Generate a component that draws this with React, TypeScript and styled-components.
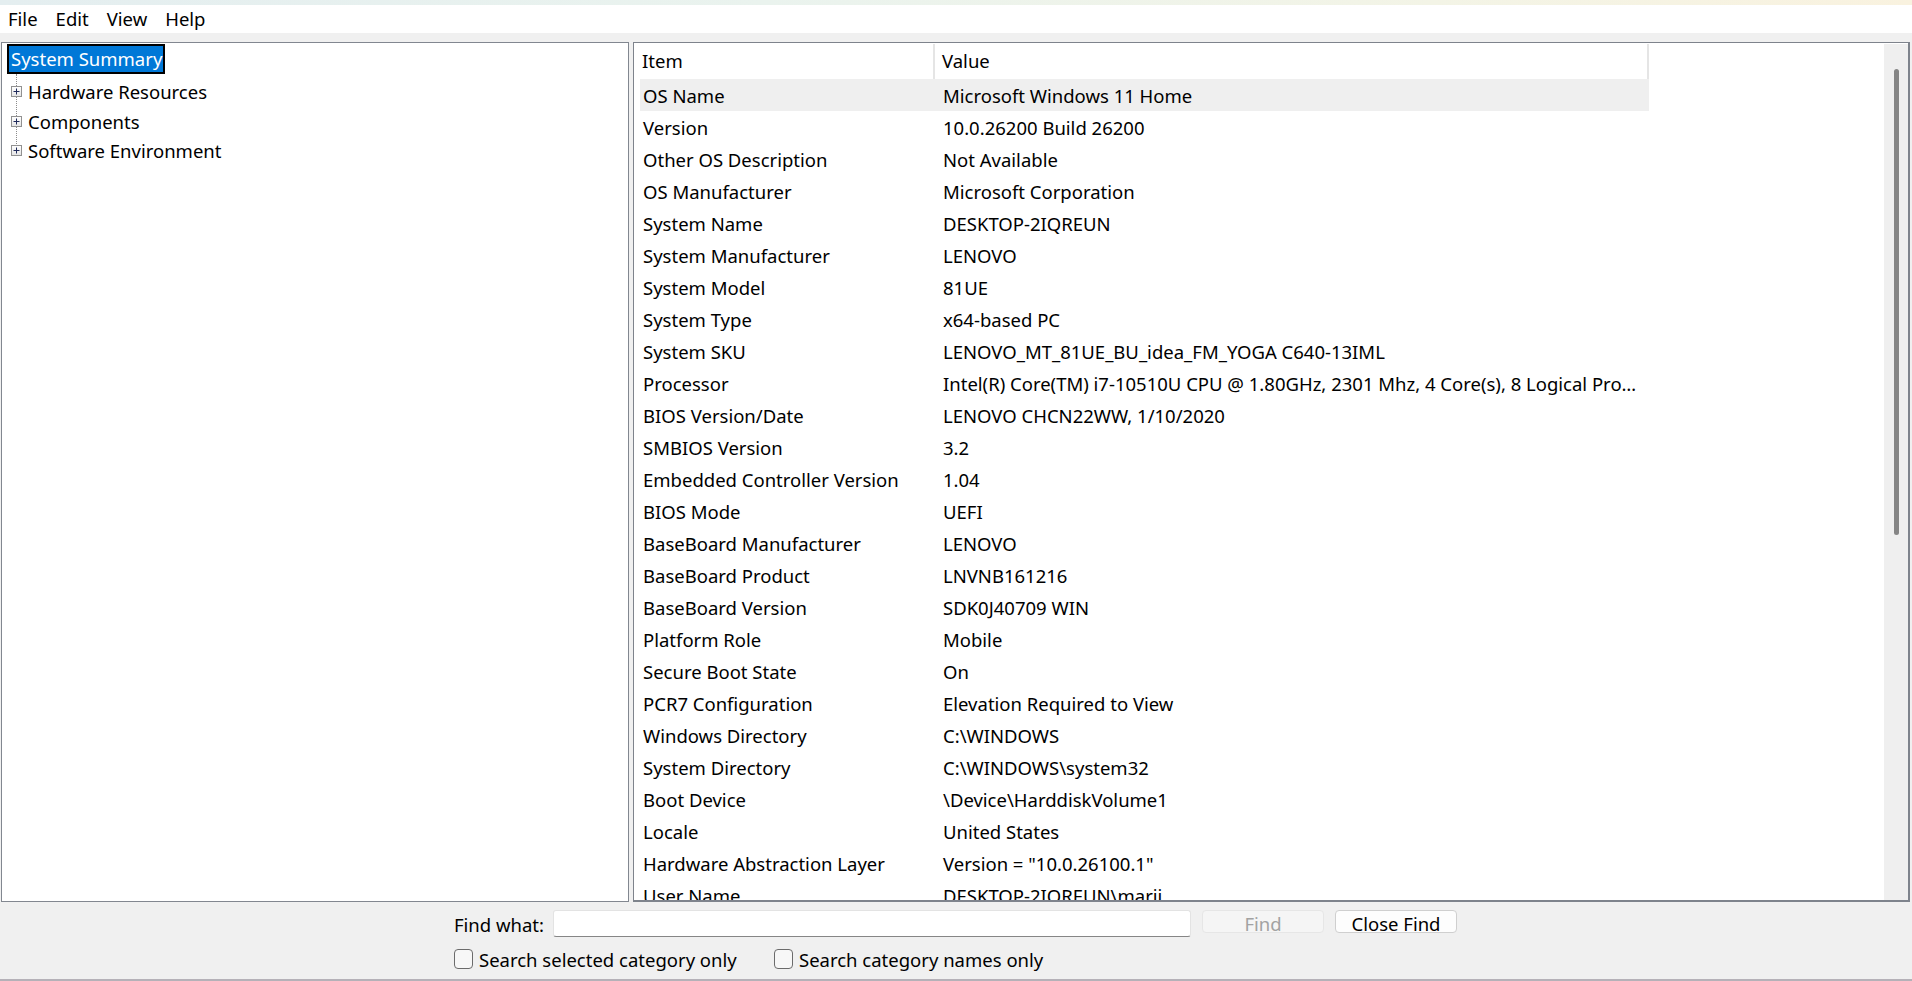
import React from 'react';
import styled, { createGlobalStyle } from 'styled-components';

const GlobalStyle = createGlobalStyle`
    html, body {
        margin: 0;
        padding: 0;
        background: #f0f0f0;
        overflow: hidden;
    }
    * {
        box-sizing: border-box;
    }
`

const rows: [string, string][] = [
    ['OS Name', 'Microsoft Windows 11 Home'],
    ['Version', '10.0.26200 Build 26200'],
    ['Other OS Description', 'Not Available'],
    ['OS Manufacturer', 'Microsoft Corporation'],
    ['System Name', 'DESKTOP-2IQREUN'],
    ['System Manufacturer', 'LENOVO'],
    ['System Model', '81UE'],
    ['System Type', 'x64-based PC'],
    ['System SKU', 'LENOVO_MT_81UE_BU_idea_FM_YOGA C640-13IML'],
    ['Processor', 'Intel(R) Core(TM) i7-10510U CPU @ 1.80GHz, 2301 Mhz, 4 Core(s), 8 Logical Processor(s)'],
    ['BIOS Version/Date', 'LENOVO CHCN22WW, 1/10/2020'],
    ['SMBIOS Version', '3.2'],
    ['Embedded Controller Version', '1.04'],
    ['BIOS Mode', 'UEFI'],
    ['BaseBoard Manufacturer', 'LENOVO'],
    ['BaseBoard Product', 'LNVNB161216'],
    ['BaseBoard Version', 'SDK0J40709 WIN'],
    ['Platform Role', 'Mobile'],
    ['Secure Boot State', 'On'],
    ['PCR7 Configuration', 'Elevation Required to View'],
    ['Windows Directory', 'C:\\WINDOWS'],
    ['System Directory', 'C:\\WINDOWS\\system32'],
    ['Boot Device', '\\Device\\HarddiskVolume1'],
    ['Locale', 'United States'],
    ['Hardware Abstraction Layer', 'Version = "10.0.26100.1"'],
    ['User Name', 'DESKTOP-2IQREUN\\marii'],
    ['Time Zone', 'Pacific Standard Time'],
]

const treeItems = ['Hardware Resources', 'Components', 'Software Environment']

const PlusBox: React.FC = () => (
    <ExpandBox>
        <svg width="9" height="9" viewBox="0 0 9 9">
            <path d="M1.5 4.5h6M4.5 1.5v6" stroke="#1f2a5a" strokeWidth="1" />
        </svg>
    </ExpandBox>
)

export default function App() {
    const [selected, setSelected] = React.useState(0)

    return (
        <Window>
            <GlobalStyle />
            <TitleStrip />
            <MenuBar>
                <MenuItem>File</MenuItem>
                <MenuItem>Edit</MenuItem>
                <MenuItem>View</MenuItem>
                <MenuItem>Help</MenuItem>
            </MenuBar>

            <Panes>
                <TreePane>
                    <SelectedNode>System Summary</SelectedNode>
                    <TreeChildren>
                        {treeItems.map(item => (
                            <TreeNode key={item}>
                                <PlusBox />
                                <span>{item}</span>
                            </TreeNode>
                        ))}
                    </TreeChildren>
                </TreePane>

                <ListPane>
                    <ListArea>
                        <HeaderRow>
                            <HeaderCell>Item</HeaderCell>
                            <HeaderCell $value>Value</HeaderCell>
                        </HeaderRow>
                        {rows.map(([item, value], i) => (
                            <DataRow key={item} $selected={i === selected} onClick={() => setSelected(i)}>
                                <ItemCell>{item}</ItemCell>
                                <ValueCell>{value}</ValueCell>
                            </DataRow>
                        ))}
                    </ListArea>
                    <ScrollTrack>
                        <ScrollThumb />
                    </ScrollTrack>
                </ListPane>
            </Panes>

            <FindBar>
                <FindRow>
                    <FindLabel>Find what:</FindLabel>
                    <FindInput />
                    <FindButton disabled>Find</FindButton>
                    <FindButton>Close Find</FindButton>
                </FindRow>
                <FindRow>
                    <CheckLabel $width={320}>
                        <CheckBox />
                        Search selected category only
                    </CheckLabel>
                    <CheckLabel>
                        <CheckBox />
                        Search category names only
                    </CheckLabel>
                </FindRow>
            </FindBar>
        </Window>
    )
}

const Window = styled.div`
    width: 1912px;
    height: 981px;
    display: flex;
    flex-direction: column;
    background: #f0f0f0;
    font-family: "Noto Sans", "Open Sans", sans-serif;
    font-size: 18.5px;
    color: #000;
    border-bottom: 2px solid #b5b1b8;
`

const TitleStrip = styled.div`
    height: 5px;
    flex-shrink: 0;
    background: linear-gradient(90deg, #e4eef0 0%, #eaf3ee 40%, #f3f4e6 75%, #f9f2df 100%);
`

const MenuBar = styled.div`
    height: 28px;
    flex-shrink: 0;
    display: flex;
    align-items: center;
    background: #fff;
`

const MenuItem = styled.div`
    padding: 0 9px 0;
    line-height: 26px;
    &:first-child {
        padding-left: 8px;
    }
`

const Panes = styled.div`
    flex: 1;
    display: flex;
    gap: 4px;
    padding: 9px 2px 0 1px;
    min-height: 0;
`

const TreePane = styled.div`
    width: 628px;
    flex-shrink: 0;
    height: 860px;
    background: #fff;
    border: 1px solid #828790;
    padding: 1px 0 0 5px;
    overflow: hidden;
`

const SelectedNode = styled.div`
    display: inline-block;
    height: 30px;
    line-height: 25px;
    padding: 0 1px 0 2px;
    background: #0078d7;
    color: #fff;
    border: 2px solid #000;
    margin-bottom: 3px;
`

const TreeChildren = styled.div`
    position: relative;
    &::before {
        content: '';
        position: absolute;
        left: 9px;
        top: -3px;
        height: 76px;
        border-left: 1px dotted #8c8c8c;
    }
`

const TreeNode = styled.div`
    position: relative;
    display: flex;
    align-items: center;
    height: 29.5px;
    padding-left: 4px;
    gap: 6px;
`

const ExpandBox = styled.span`
    display: flex;
    align-items: center;
    justify-content: center;
    width: 11px;
    height: 11px;
    border: 1px solid #919191;
    background: linear-gradient(180deg, #ffffff 0%, #e6e6e6 100%);
    flex-shrink: 0;
    svg {
        display: block;
    }
`

const ListPane = styled.div`
    flex: 1;
    height: 860px;
    display: flex;
    background: #fff;
    border: 1px solid #7e838c;
    border-width: 1px 2px 2px 1px;
    overflow: hidden;
`

const ListArea = styled.div`
    flex: 1;
    padding: 1px 0 0 6px;
    overflow: hidden;
`

const HeaderRow = styled.div`
    display: grid;
    grid-template-columns: 295px 714px;
    width: 1009px;
    height: 35px;
`

const HeaderCell = styled.div<{ $value?: boolean }>`
    display: flex;
    align-items: center;
    padding-left: ${p => (p.$value ? '7px' : '2px')};
    border-right: 2px solid #e5e5e5;
    padding-bottom: 2px;
`

const DataRow = styled.div<{ $selected?: boolean }>`
    display: grid;
    grid-template-columns: 295px 714px;
    width: 1009px;
    height: 32px;
    align-items: center;
    background: ${p => (p.$selected ? '#efefef' : 'transparent')};
`

const ItemCell = styled.div`
    padding-left: 3px;
    white-space: nowrap;
    overflow: hidden;
`

const ValueCell = styled.div`
    padding: 0 10px 0 8px;
    white-space: nowrap;
    overflow: hidden;
    text-overflow: ellipsis;
`

const ScrollTrack = styled.div`
    width: 24px;
    flex-shrink: 0;
    background: #efefef;
    margin: 1px 0 0;
    padding: 25px 0 0 10px;
`

const ScrollThumb = styled.div`
    width: 5px;
    height: 466px;
    border-radius: 3px;
    background: #858585;
`

const FindBar = styled.div`
    height: 77px;
    flex-shrink: 0;
    padding: 8px 0 0 454px;
    display: flex;
    flex-direction: column;
    gap: 11px;
`

const FindRow = styled.div`
    display: flex;
    align-items: center;
`

const FindLabel = styled.div`
    width: 99px;
    padding-top: 2px;
`

const FindInput = styled.input`
    width: 638px;
    height: 27px;
    background: #fff;
    border: 1px solid #e3e3e3;
    border-bottom: 1px solid #868686;
    border-radius: 3px;
    outline: 0;
    margin-right: 11px;
`

const FindButton = styled.button`
    width: 122px;
    height: 23px;
    margin-right: 11px;
    margin-top: -4px;
    padding: 3px 0 0;
    font-family: inherit;
    font-size: 18.5px;
    line-height: 19px;
    color: #000;
    background: #fdfdfd;
    border: 1px solid #cfcfcf;
    border-radius: 4px;

    &:disabled {
        color: #a2a2a2;
        background: #f5f5f5;
        border-color: #e6e6e6;
    }
`

const CheckLabel = styled.label<{ $width?: number }>`
    display: flex;
    align-items: center;
    gap: 6px;
    width: ${p => (p.$width ? `${p.$width}px` : 'auto')};
    height: 20px;
    margin-top: 1px;
`

const CheckBox = styled.span`
    width: 19px;
    height: 20px;
    border: 1px solid #6b6b6b;
    border-radius: 4px;
    background: #f7f7f7;
    flex-shrink: 0;
`
